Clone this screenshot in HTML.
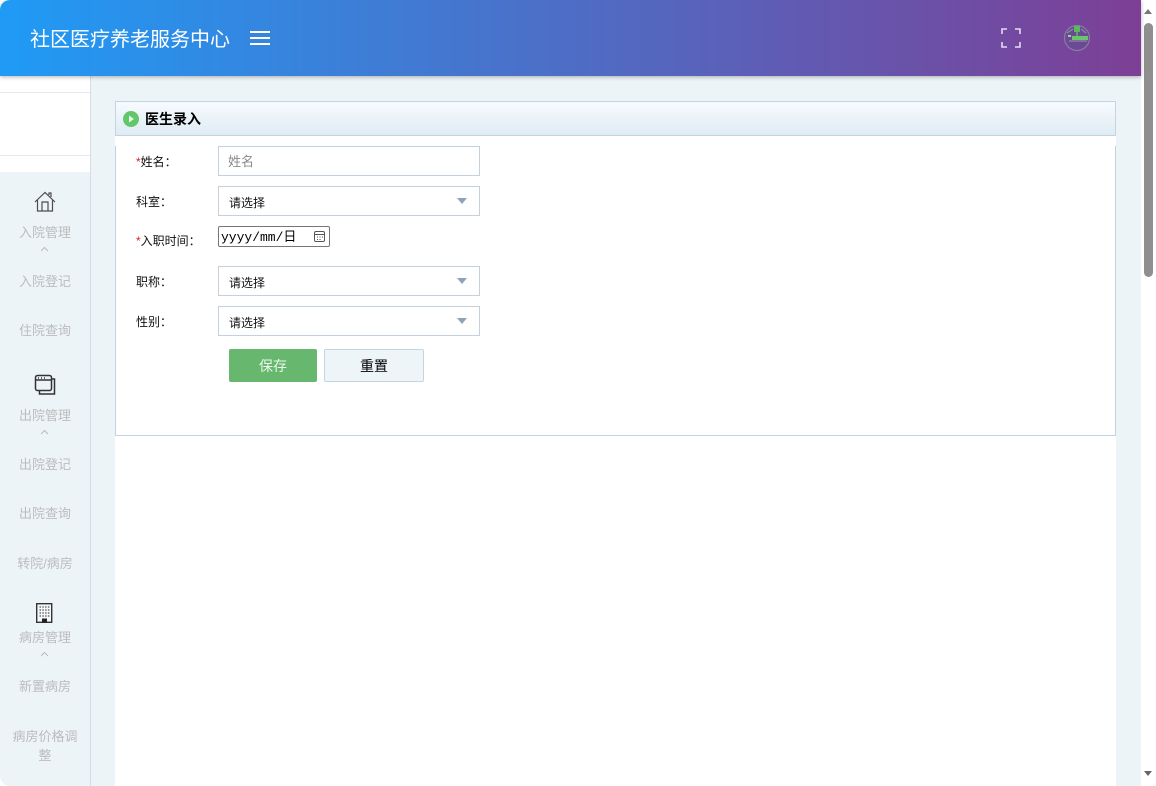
<!DOCTYPE html>
<html lang="zh-CN">
<head>
<meta charset="utf-8">
<title>社区医疗养老服务中心</title>
<style>
html,body{margin:0;padding:0;width:1156px;height:786px;overflow:hidden;background:#fff;}
body{font-family:"Liberation Sans","Noto Sans CJK SC",sans-serif;color:#000;font-size:12px;position:relative;}
.a{position:absolute;white-space:nowrap;}
#main{left:0;top:0;width:1141px;height:786px;background:#ecf4f8;overflow:hidden;border-radius:10px 0 0 10px;}
#top{left:0;top:0;width:1141px;height:76px;background:linear-gradient(90deg,#1f9bf5 0%,#7d3f96 100%);box-shadow:0 1px 4px rgba(0,0,0,.3);z-index:5;}
#title{left:30px;top:26px;font-size:20px;line-height:28px;color:#fff;}
.bar{left:250px;width:20px;height:2px;background:#fff;}
#sideborder{left:90px;top:76px;width:1px;height:710px;background:#d3dde3;}
#wh{left:0;top:76px;width:90px;height:96px;background:#fff;}
.hr{left:0;width:90px;height:1px;background:#e4e8ea;}
.nav{left:0;width:90px;text-align:center;color:#bcbcbc;font-size:13px;line-height:19px;white-space:normal;}
.chev{left:41px;width:7px;height:7px;}
#head{left:115px;top:101px;width:999px;height:33px;border:1px solid #c3d5e0;background:linear-gradient(180deg,#f7fbfd 0%,#dfebf4 100%);}
#panel{left:115px;top:136px;width:1001px;height:650px;background:#fff;}
#pb{left:115px;top:146px;width:999px;height:289px;border:1px solid #c3d2dc;border-top:0;}
#htext{left:145px;top:109px;font-size:14px;line-height:20px;font-weight:bold;color:#000;}
.lab{left:136px;font-size:12px;line-height:18px;color:#111;}
.lab i{color:#d22;font-style:normal;}
.box{left:218px;width:260px;height:28px;border:1px solid #c4d1dc;background:#fff;}
.seltxt{left:229px;font-size:12px;line-height:18px;color:#111;}
.arr{left:457px;width:0;height:0;border-left:5px solid transparent;border-right:5px solid transparent;border-top:6px solid #8ca2b7;}
#date{left:218px;top:226px;width:110px;height:19px;border:1px solid #767676;border-radius:2px;background:#fff;}
#datetxt{left:221px;top:229px;font-family:"Liberation Mono","Noto Sans CJK SC",monospace;font-size:13px;line-height:17px;color:#000;}
#save{left:229px;top:349px;width:88px;height:33px;background:#67b86e;border-radius:2px;color:#e8f8ea;font-size:14px;line-height:35px;text-align:center;}
#reset{left:324px;top:349px;width:98px;height:31px;background:#eef5f9;border:1px solid #c4d5e0;border-radius:2px;color:#000;font-size:14px;line-height:32px;text-align:center;}
#sb{left:1141px;top:0;width:15px;height:786px;background:#fff;}
#thumb{left:1144px;top:23px;width:9px;height:254px;background:#8f8f8f;border-radius:5px;}
</style>
</head>
<body>
<div class="a" id="main"></div>
<div class="a" id="wh"></div>
<div class="a hr" style="top:92px"></div>
<div class="a hr" style="top:155px"></div>
<div class="a" id="sideborder"></div>
<div class="a" id="top" style="border-radius:10px 0 0 0"></div>
<div class="a" id="title" style="z-index:6">社区医疗养老服务中心</div>
<div class="a bar" style="top:31px;z-index:6"></div>
<div class="a bar" style="top:37px;z-index:6"></div>
<div class="a bar" style="top:43px;z-index:6"></div>
<svg class="a" style="left:1001px;top:28px;z-index:6" width="20" height="20" viewBox="0 0 20 20" fill="none" stroke="#e6dcef" stroke-width="1.6"><path d="M1 6V1h5M14 1h5v5M19 14v5h-5M6 19H1v-5"/></svg>
<svg class="a" style="left:1063px;top:24px;z-index:6" width="28" height="28" viewBox="0 0 28 28" fill="none"><circle cx="14" cy="14" r="12.500" fill="#6a4a92" stroke="#8a7ba6" stroke-width="1.200"/><rect x="11" y="2" width="6" height="6" fill="#5cb85c"/><rect x="13.300" y="8" width="1.500" height="4" fill="#5cb85c"/><rect x="9" y="12" width="16" height="4" fill="#6cc46c"/><rect x="5" y="11" width="3" height="2" fill="#8ed88e"/><path d="M4 9l6-4M18 5l5 4M6 17h18" stroke="#9a92b0"/></svg>

<svg class="a" style="left:34px;top:191px" width="22" height="22" viewBox="0 0 22 22" fill="none" stroke="#4d4d4d" stroke-width="1.2"><path d="M1 11L11 1.500 21 11M3.500 9v11h15V9M8 20v-9h6v9M15 4V2h2v4"/></svg>
<div class="a nav" style="top:223px">入院管理</div>
<svg class="a chev" style="top:246px" viewBox="0 0 7 7" fill="none" stroke="#bbb"><path d="M0 5L3.500 1.500 7 5"/></svg>
<div class="a nav" style="top:272px">入院登记</div>
<div class="a nav" style="top:321px">住院查询</div>
<svg class="a" style="left:34px;top:374px" width="22" height="22" viewBox="0 0 22 22" fill="none" stroke="#333" stroke-width="1.500"><rect x="1.500" y="1.500" width="16" height="15" rx="2"/><path d="M1.500 6h16M17.500 5h3v15h-15v-3.500"/><path d="M4 4h1M7 4h1M10 4h1"/></svg>
<div class="a nav" style="top:406px">出院管理</div>
<svg class="a chev" style="top:429px" viewBox="0 0 7 7" fill="none" stroke="#bbb"><path d="M0 5L3.500 1.500 7 5"/></svg>
<div class="a nav" style="top:455px">出院登记</div>
<div class="a nav" style="top:504px">出院查询</div>
<div class="a nav" style="top:554px">转院/病房</div>
<svg class="a" style="left:36px;top:603px" width="18" height="20" viewBox="0 0 18 20"><rect x=".7" y=".7" width="15" height="18.600" fill="#f4f7f9" stroke="#333" stroke-width="1.400"/><path d="M3.500 4h10M3.500 7h10M3.500 10h10M3.500 13h10" stroke="#555" stroke-width="1.300" stroke-dasharray="1.500 1.300"/><rect x="6" y="15.500" width="5" height="4" fill="#222"/></svg>
<div class="a nav" style="top:628px">病房管理</div>
<svg class="a chev" style="top:651px" viewBox="0 0 7 7" fill="none" stroke="#bbb"><path d="M0 5L3.500 1.500 7 5"/></svg>
<div class="a nav" style="top:677px">新置病房</div>
<div class="a nav" style="top:727px;left:12px;width:66px">病房价格调整</div>

<div class="a" id="panel"></div>
<div class="a" id="head"></div>
<div class="a" id="pb"></div>
<svg class="a" style="left:123px;top:111px" width="16" height="16" viewBox="0 0 16 16"><circle cx="8" cy="8" r="8" fill="#62c76b"/><path d="M6 4.500L11 8 6 11.500z" fill="#e8f7e8"/></svg>
<div class="a" id="htext">医生录入</div>

<div class="a lab" style="top:153px"><i>*</i>姓名：</div>
<div class="a box" style="top:146px"></div>
<div class="a" style="left:228px;top:153px;font-size:13px;line-height:18px;color:#8a8a8a">姓名</div>

<div class="a lab" style="top:193px">科室：</div>
<div class="a box" style="top:186px"></div>
<div class="a seltxt" style="top:194px">请选择</div>
<div class="a arr" style="top:198px"></div>

<div class="a lab" style="top:232px"><i>*</i>入职时间：</div>
<div class="a" id="date"></div>
<div class="a" id="datetxt">yyyy/mm/日</div>
<svg class="a" style="left:313px;top:230px" width="13" height="13" viewBox="0 0 13 13" fill="none" stroke="#555"><rect x="1.500" y="1.500" width="10" height="10" rx="1.500"/><path d="M1.500 4.500h10M4 7h1M6.500 7h1M9 7h1M4 9.500h1M6.500 9.500h1"/></svg>

<div class="a lab" style="top:273px">职称：</div>
<div class="a box" style="top:266px"></div>
<div class="a seltxt" style="top:274px">请选择</div>
<div class="a arr" style="top:278px"></div>

<div class="a lab" style="top:313px">性别：</div>
<div class="a box" style="top:306px"></div>
<div class="a seltxt" style="top:314px">请选择</div>
<div class="a arr" style="top:318px"></div>

<div class="a" id="save">保存</div>
<div class="a" id="reset">重置</div>

<div class="a" id="sb"></div>
<div class="a" id="thumb"></div>
<div class="a" style="left:1144px;top:9px;width:0;height:0;border-left:4.500px solid transparent;border-right:4.500px solid transparent;border-bottom:5px solid #777"></div>
<div class="a" style="left:1144px;top:771px;width:0;height:0;border-left:4.500px solid transparent;border-right:4.500px solid transparent;border-top:5px solid #666"></div>
</body>
</html>
